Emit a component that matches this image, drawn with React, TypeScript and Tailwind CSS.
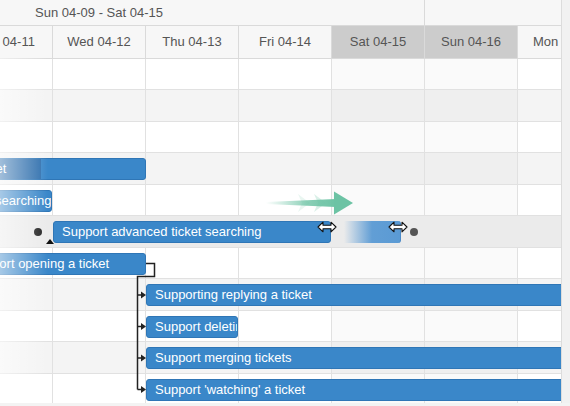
import React from "react";

const DAYS = [
  { label: "Tue 04-11", weekend: false },
  { label: "Wed 04-12", weekend: false },
  { label: "Thu 04-13", weekend: false },
  { label: "Fri 04-14", weekend: false },
  { label: "Sat 04-15", weekend: true },
  { label: "Sun 04-16", weekend: true },
  { label: "Mon 04-17", weekend: false },
];

// left / width in px from the start of the Tue 04-11 column
type Bar = { left: number; width: number; text: string; textLeft?: number; progress?: number };

const ROWS: { bar?: Bar; hover?: boolean }[] = [
  {},
  {},
  {},
  { bar: { left: -190, width: 376, text: "Support editing a ticket", textLeft: 103, progress: 270 } },
  { bar: { left: -190, width: 282, text: "Support basic searching", textLeft: 141 } },
  { bar: { left: 93, width: 278, text: "Support advanced ticket searching" }, hover: true },
  { bar: { left: 0, width: 186, text: "Support opening a ticket" } },
  { bar: { left: 186, width: 420, text: "Supporting replying a ticket" } },
  { bar: { left: 186, width: 92, text: "Support deleting a ticket" } },
  { bar: { left: 186, width: 420, text: "Support merging tickets" } },
  { bar: { left: 186, width: 420, text: "Support 'watching' a ticket" } },
];

function ResizeCursor({ className }: { className: string }) {
  return (
    <svg className={`absolute top-[5px] ${className}`} width="20" height="12" viewBox="0 0 20 12">
      <path
        d="M1 6 L6 1.2 L6 4.3 L14 4.3 L14 1.2 L19 6 L14 10.8 L14 7.7 L6 7.7 L6 10.8 Z"
        fill="#fff"
        stroke="#111"
        strokeWidth="1.1"
        strokeLinejoin="round"
      />
    </svg>
  );
}

// drag proxy, resize handles and terminals on the hovered task row
function HoverDecor() {
  return (
    <>
      <div className="absolute top-[5px] left-[384px] h-[22px] w-[57px] rounded-r-[3px] border-r border-[#4a89c6] bg-linear-to-r from-[#5a9ad4]/0 via-[#5a9ad4]/95 to-[#5a9ad4]" />
      <ResizeCursor className="left-[357px]" />
      <ResizeCursor className="left-[428px]" />
      <div className="absolute top-[12px] left-[450px] w-2 h-2 rounded-full bg-[#555]" />
      <div className="absolute top-[12px] left-[74px] w-2 h-2 rounded-full bg-[#222]" />
      <div className="absolute top-[23px] left-[86px] w-0 h-0 border-x-4 border-b-[5px] border-x-transparent border-b-[#111]" />
    </>
  );
}

function GridRow({ index, hover, bar }: { index: number; hover?: boolean; bar?: Bar }) {
  const striped = index % 2 === 1;
  return (
    <div
      className={`relative -ml-[40px] h-[31.5px] border-b border-[#e1e1e1] flex ${
        hover ? "bg-[#ebebeb]" : striped ? "bg-[#f4f4f4]" : "bg-white"
      }`}
    >
      {!hover &&
        DAYS.map((d) => (
          <div
            key={d.label}
            className={`w-[93px] shrink-0 border-r border-[#e1e1e1] ${
              d.weekend ? (striped ? "bg-[#efefef]" : "bg-[#fafafa]") : ""
            }`}
          />
        ))}
      {bar && (
        <div
          className="absolute top-[5px] h-[22px] rounded-[3px] bg-[#3a87c9] border border-[#2f76b6] overflow-hidden"
          style={{ left: bar.left, width: bar.width }}
        >
          {bar.progress && (
            <div className="absolute left-0 inset-y-0 bg-[#2f6fad]" style={{ width: bar.progress }} />
          )}
          <span
            className="absolute top-0 pl-2 leading-[20px] text-[13px] text-white whitespace-nowrap"
            style={{ left: (bar.textLeft ?? 8) - 8 }}
          >
            {bar.text}
          </span>
        </div>
      )}
      {hover && <HoverDecor />}
    </div>
  );
}

export default function App() {
  return (
    <div className="relative w-[570px] h-[406px] overflow-hidden bg-white text-[13px] text-[#555] font-['Liberation_Sans',Arial,sans-serif]">
      <div className="w-[561px] overflow-hidden">
        {/* Header */}
        <div className="flex -ml-[226px] h-[26px] bg-[#f7f7f7] border-b border-[#dadada]">
          <div className="w-[651px] shrink-0 border-r border-[#dadada] flex items-center justify-center">
            Sun 04-09 - Sat 04-15
          </div>
          <div className="w-[651px] shrink-0" />
        </div>
        <div className="flex -ml-[40px] h-[32.5px] bg-[#f7f7f7] border-b border-[#dadada]">
          {DAYS.map((d) => (
            <div
              key={d.label}
              className={`w-[93px] shrink-0 border-r border-[#dadada] flex items-center justify-center whitespace-nowrap ${
                d.weekend ? "bg-[#cccccc]" : ""
              }`}
            >
              {d.label}
            </div>
          ))}
        </div>

        {/* Body */}
        <div className="relative">
          {ROWS.map((r, i) => (
            <GridRow key={i} index={i} hover={r.hover} bar={r.bar} />
          ))}

          {/* motion arrow */}
          <svg className="absolute left-[262px] top-[131px] pointer-events-none" width="94" height="26" viewBox="0 0 94 26">
            <defs>
              <linearGradient id="shaft" x1="0" x2="1">
                <stop offset="0" stopColor="#6cc3a4" stopOpacity="0" />
                <stop offset="0.6" stopColor="#6cc3a4" stopOpacity="0.8" />
                <stop offset="1" stopColor="#6cc3a4" stopOpacity="1" />
              </linearGradient>
            </defs>
            <path d="M36 4 L48 13 L36 22 L40 13 Z" fill="#6cc3a4" opacity="0.15" />
            <path d="M52 4 L64 13 L52 22 L56 13 Z" fill="#6cc3a4" opacity="0.25" />
            <path d="M4 12 L74 9 L74 17 L4 14 Z" fill="url(#shaft)" />
            <path d="M72 1.5 L91 13 L72 24.5 Z" fill="#6cc3a4" />
          </svg>

          {/* dependency lines */}
          <svg className="absolute left-0 top-0 pointer-events-none" width="561" height="350">
            <path d="M146 204.5 H154.5 V217.5 H137.5 V330.5" fill="none" stroke="#222" strokeWidth="1.5" />
            {[236, 267.5, 299, 330.5].map((y) => (
              <g key={y}>
                <path d={`M137.5 ${y} H142`} stroke="#222" strokeWidth="1.5" />
                <path d={`M141 ${y - 3.5} L146 ${y} L141 ${y + 3.5} Z`} fill="#222" />
              </g>
            ))}
          </svg>
        </div>
      </div>

      {/* left fade */}
      <div className="absolute left-0 top-[58px] bottom-0 w-12 pointer-events-none bg-linear-to-r from-white/55 to-white/0" />

      {/* scrollbar gutters */}
      <div className="absolute right-0 inset-y-0 w-[9px] bg-[#f1f1f1] border-l border-[#dcdcdc]" />
      <div className="absolute inset-x-0 bottom-0 h-[3px] bg-[#f3f3f3]" />
    </div>
  );
}
